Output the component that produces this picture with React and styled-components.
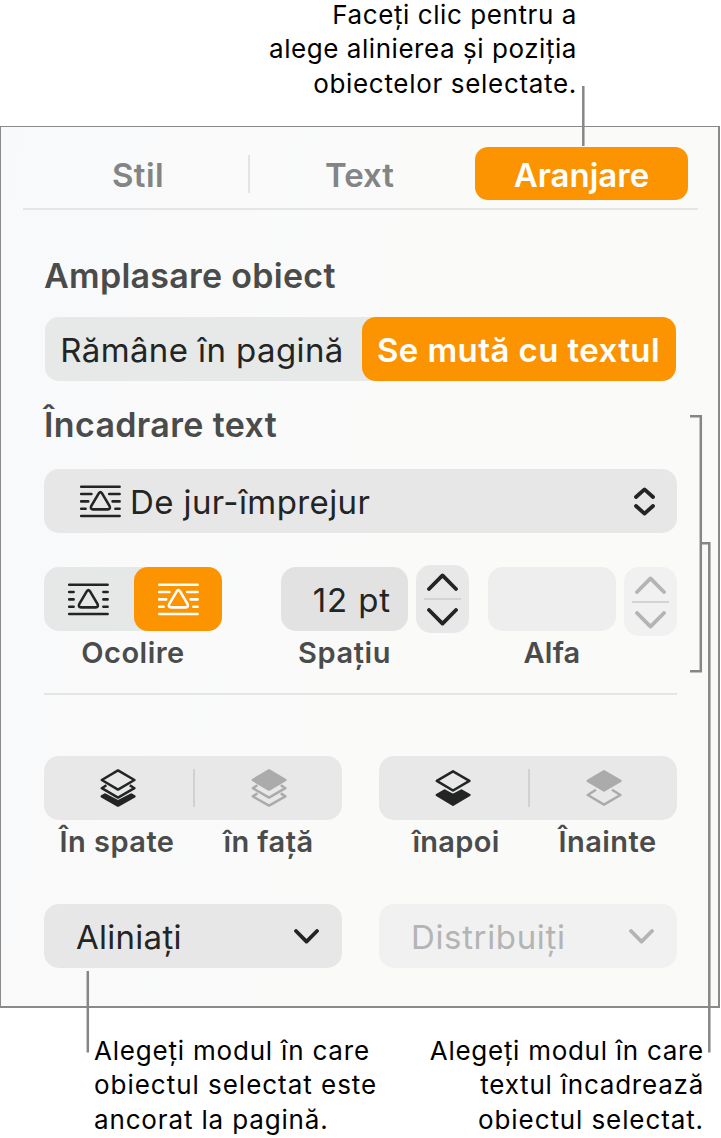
import React from "react";
import styled, { createGlobalStyle } from "styled-components";

const GlobalStyle = createGlobalStyle`
  :root {
    --orange: #fb9400;
    --ink: #232424;
    --heading: #4a4b4b;
    --muted: #b4b4b4;
    --line: #868686;
  }

  body {
    margin: 0;
    background: #fff;
    font-family: Inter, "Liberation Sans", sans-serif;
  }
`;

// text wrapping glyph, `tight` lines follow the contour of the triangle
const WrapIcon = ({ tight }) => (
  <svg width="43" height="33" viewBox="0 0 43 33" fill="none" stroke="currentColor" strokeWidth="2.6" strokeLinecap="round" strokeLinejoin="round">
    <path d="M2.2 1.8H40.6M2.2 31H40.6" />
    {tight ? (
      <path d="M2.2 9H12.4M30.2 9H40.6M2.2 16.4H9.2M33.6 16.4H40.6M2.2 23.7H6.6M36.4 23.7H40.6" />
    ) : (
      <path d="M2.2 9H6.6M36.4 9H40.6M2.2 16.4H6.6M36.4 16.4H40.6M2.2 23.7H6.6M36.4 23.7H40.6" />
    )}
    <path d="M19.9 8.2Q21.4 6 22.9 8.2L30.6 21.2Q31.6 24.4 28.8 24.4H14Q11.2 24.4 12.2 21.2Z" />
  </svg>
);

const Chevron = ({ width, height, up }) => (
  <svg width={width} height={height} fill="none" stroke="currentColor" strokeWidth="3.8" strokeLinecap="round" strokeLinejoin="round">
    <path
      d={up
        ? `M2 ${height - 2}L${width / 2} 2.4L${width - 2} ${height - 2}`
        : `M2 2L${width / 2} ${height - 2.4}L${width - 2} 2`}
    />
  </svg>
);

const TopSheet = ({ y, filled }) => (
  <path
    d={`M18 ${y}L34.4 ${y + 9.6}L18 ${y + 19.2}L1.8 ${y + 9.6}Z`}
    fill={filled ? "currentColor" : "none"}
  />
);

const Layers = ({ children }) => (
  <svg width="36" height="40" viewBox="0 0 36 40" fill="none" stroke="currentColor" strokeWidth="2.5" strokeLinejoin="round">
    {children}
  </svg>
);

const BackIcon = () => (
  <Layers>
    <TopSheet y={2.4} />
    <path d="M6.4 17.2L1.8 20.2L18 29.6L34.4 20.2L29.8 17.2" />
    <path d="M5 26.6L1.8 28.4L18 37.6L34.4 28.4L31.2 26.6L18 33.4Z" fill="currentColor" />
  </Layers>
);

const FrontIcon = () => (
  <Layers>
    <TopSheet y={2.4} filled />
    <path d="M6.4 17.2L1.8 20.2L18 29.6L34.4 20.2L29.8 17.2" />
    <path d="M6.4 25.4L1.8 28.4L18 37.6L34.4 28.4L29.8 25.4" />
  </Layers>
);

const BackwardIcon = () => (
  <Layers>
    <TopSheet y={3.3} />
    <path d="M9.6 22.6L1.8 27L18 36.8L34.4 27L26.4 22.6L18 27Z" fill="currentColor" />
  </Layers>
);

const ForwardIcon = () => (
  <Layers>
    <TopSheet y={3.3} filled />
    <path d="M10 21.8L1.8 27L18 36.6L34.4 27L26 21.8" />
  </Layers>
);

const Caption = ({ lines, align }) => (
  <CaptionText $align={align}>
    {lines.map(([text, spacing]) => (
      <Line key={text} $spacing={spacing}>{text}</Line>
    ))}
  </CaptionText>
);

const LayerGroup = ({ left, right }) => (
  <div>
    <ButtonGroup>
      <LayerButton>{left.icon}</LayerButton>
      <Divider />
      <LayerButton $disabled>{right.icon}</LayerButton>
    </ButtonGroup>
    <LabelPair>
      <Label $spacing={left.spacing} $shift={left.shift}>{left.label}</Label>
      <Label $spacing={right.spacing} $shift={right.shift}>{right.label}</Label>
    </LabelPair>
  </div>
);

const NumberStepper = ({ disabled }) => (
  <Stepper $disabled={disabled}>
    <Chevron width={31} height={18} up />
    <StepperRule />
    <Chevron width={31} height={18} />
  </Stepper>
);

const App = () => (
  <Page>
    <GlobalStyle />
    <Header>
      <Caption
        align="right"
        lines={[
          ["Faceți clic pentru a", 0.58],
          ["alege alinierea și poziția", 0.55],
          ["obiectelor selectate.", 0.68],
        ]}
      />
    </Header>

    <Panel>
      <Tabs>
        <Tab $spacing={0.4} $left={5}>Stil</Tab>
        <TabDivider />
        <Tab $right={6}>Text</Tab>
        <ActiveTab>Aranjare</ActiveTab>
      </Tabs>

      <Body>
        <Heading $spacing={0.27}>Amplasare obiect</Heading>
        <Placement>
          <Segment $spacing={0.4}>Rămâne în pagină</Segment>
          <Segment $active $spacing={0.42}>Se mută cu textul</Segment>
        </Placement>

        <Heading $spacing={0.35} $top={22}>Încadrare text</Heading>
        <Select $top={22} $padding="0 22px 0 35px">
          <WrapIcon tight />
          <SelectText $spacing={0.4} $gap={8}>De jur-împrejur</SelectText>
          <UpDown>
            <Chevron width={21} height={12} up />
            <Chevron width={21} height={12} />
          </UpDown>
        </Select>

        <Controls>
          <Column>
            <FitGroup>
              <FitButton><WrapIcon /></FitButton>
              <FitButton $active><WrapIcon tight /></FitButton>
            </FitGroup>
            <Label $spacing={0.5}>Ocolire</Label>
          </Column>
          <Column>
            <Field>12 pt</Field>
            <Label $spacing={0.6}>Spațiu</Label>
          </Column>
          <NumberStepper />
          <Column>
            <Field $disabled />
            <Label $spacing={0.2}>Alfa</Label>
          </Column>
          <NumberStepper disabled />
        </Controls>

        <Rule />

        <Pair $top={61}>
          <LayerGroup
            left={{ icon: <BackIcon />, label: "În spate", spacing: 0.46, shift: -4 }}
            right={{ icon: <FrontIcon />, label: "în față", spacing: 0.45, shift: 1 }}
          />
          <LayerGroup
            left={{ icon: <BackwardIcon />, label: "înapoi", spacing: 0.3, shift: 4 }}
            right={{ icon: <ForwardIcon />, label: "Înainte", spacing: 0.45, shift: 9 }}
          />
        </Pair>

        <Pair $top={44}>
          <Select $padding="0 23px 0 32px">
            <SelectText $spacing={0.27}>Aliniați</SelectText>
            <Chevron width={25} height={15} />
          </Select>
          <Select $disabled $padding="0 23px 0 32px">
            <SelectText $spacing={0.65}>Distribuiți</SelectText>
            <Chevron width={25} height={15} />
          </Select>
        </Pair>
      </Body>
    </Panel>

    <Footer>
      <Caption
        lines={[
          ["Alegeți modul în care", 0.8],
          ["obiectul selectat este", 0.97],
          ["ancorat la pagină.", 0.85],
        ]}
      />
      <Caption
        align="right"
        lines={[
          ["Alegeți modul în care", 0.72],
          ["textul încadrează", 0.77],
          ["obiectul selectat.", 0.9],
        ]}
      />
    </Footer>

    <Callouts width="721" height="1138">
      <path d="M583.3 86V146M87.8 971V1052.5M690 416.3H700.8V671.3H690M702 543.3H709.3V1052.5" />
    </Callouts>
  </Page>
);

const Page = styled.div`
  position: relative;
  display: flex;
  flex-direction: column;
  width: 721px;
  height: 1138px;
`;

const Header = styled.header`
  height: 126px;
  flex-shrink: 0;
  display: flex;
  justify-content: flex-end;
  padding-right: 144px;
  box-sizing: border-box;

  > div {
    margin-top: -2px;
  }
`;

const Footer = styled.footer`
  display: flex;
  justify-content: space-between;
  padding: 26px 17px 0 94px;
`;

const CaptionText = styled.div`
  display: flex;
  flex-direction: column;
  align-items: ${p => p.$align === "right" ? "flex-end" : "flex-start"};
  font-size: 26px;
  line-height: 34.4px;
  color: #000;
`;

const Line = styled.span`
  white-space: nowrap;
  letter-spacing: ${p => p.$spacing}px;
`;

const Panel = styled.main`
  width: 720px;
  height: 882px;
  flex-shrink: 0;
  box-sizing: border-box;
  padding: 20px 20px 0 22px;
  border: solid #8a8a8a;
  border-width: 1px 2px 2px 1px;
  background: linear-gradient(100deg, #f8f9fa 0%, #fafafa 40%, #fafaf9 100%);
`;

const Tabs = styled.nav`
  display: grid;
  grid-template-columns: 225px 2px 1fr 213px;
  width: 675px;
  height: 63px;
  box-sizing: border-box;
  padding-right: 10px;
  border-bottom: 2px solid #e4e5e5;
`;

const Tab = styled.button`
  height: 53px;
  border: none;
  background: none;
  padding: 2px ${p => p.$right || 0}px 0 ${p => p.$left || 0}px;
  font: 600 33px Inter, sans-serif;
  letter-spacing: ${p => p.$spacing || 0}px;
  color: #838484;
`;

const ActiveTab = styled(Tab)`
  border-radius: 13px;
  background-color: var(--orange);
  color: #fff;
`;

const TabDivider = styled.div`
  height: 38px;
  margin-top: 8px;
  background-color: #e3e4e4;
`;

const Body = styled.div`
  width: 633px;
  margin-left: 21px;
  padding-top: 44px;
`;

const Heading = styled.h2`
  margin: ${p => p.$top || 0}px 0 0;
  font-size: 34px;
  font-weight: 600;
  line-height: 44px;
  letter-spacing: ${p => p.$spacing}px;
  color: var(--heading);
`;

const Placement = styled.div`
  display: grid;
  grid-template-columns: 317px 314px;
  height: 64px;
  width: 631px;
  margin: 19px 0 0 1px;
  border-radius: 14px;
  background-color: #e7e8e8;
`;

const Segment = styled.button`
  border: none;
  border-radius: 14px;
  padding: 1px ${p => p.$active ? 1 : 3}px 0 0;
  background: ${p => p.$active ? "var(--orange)" : "none"};
  color: ${p => p.$active ? "#fff" : "var(--ink)"};
  font: ${p => p.$active ? 600 : 400} 33px Inter, sans-serif;
  letter-spacing: ${p => p.$spacing}px;
  white-space: nowrap;
`;

const Select = styled.div`
  display: flex;
  align-items: center;
  height: 64px;
  box-sizing: border-box;
  margin-top: ${p => p.$top || 0}px;
  padding: ${p => p.$padding};
  border-radius: 15px;
  background-color: ${p => p.$disabled ? "#f1f1f1" : "#e7e7e7"};
  color: ${p => p.$disabled ? "var(--muted)" : "var(--ink)"};
`;

const SelectText = styled.span`
  flex: 1;
  padding-top: 1px;
  margin-left: ${p => p.$gap || 0}px;
  font-size: 33px;
  letter-spacing: ${p => p.$spacing}px;
`;

const UpDown = styled.span`
  display: flex;
  flex-direction: column;
  gap: 5px;
`;

const Controls = styled.div`
  display: grid;
  grid-template-columns: 178px 127px 53px 128px 53px;
  column-gap: 8px;
  height: 106px;
  margin-top: 32px;

  > :nth-child(2), > :nth-child(3) {
    margin: 0 -51px 0 51px;
  }

  > :nth-child(4), > :nth-child(5) {
    margin: 0 -62px 0 62px;
  }
`;

const Column = styled.div`
  padding-top: 2px;
`;

const FitGroup = styled.div`
  display: grid;
  grid-template-columns: 90px 88px;
  height: 64px;
  border-radius: 15px;
  background-color: #e6e7e7;
`;

const FitButton = styled.button`
  display: flex;
  align-items: center;
  justify-content: center;
  border: none;
  border-radius: 14px;
  padding: 0 ${p => p.$active ? 0 : 2}px 0 0;
  background: ${p => p.$active ? "var(--orange)" : "none"};
  color: ${p => p.$active ? "#fff" : "var(--ink)"};
`;

const Field = styled.div`
  height: 64px;
  box-sizing: border-box;
  padding: 1px 17px 0 0;
  border-radius: 15px;
  background-color: ${p => p.$disabled ? "#eeeeee" : "#e2e2e2"};
  font-size: 33px;
  line-height: 64px;
  letter-spacing: 0.9px;
  text-align: right;
  color: var(--ink);
`;

const Stepper = styled.div`
  display: flex;
  flex-direction: column;
  align-items: center;
  gap: 8px;
  height: ${p => p.$disabled ? 69 : 68}px;
  box-sizing: border-box;
  padding-top: ${p => p.$disabled ? 9 : 8}px;
  border-radius: 15px;
  background-color: ${p => p.$disabled ? "#f1f1f1" : "#e8e8e8"};
  color: ${p => p.$disabled ? "var(--muted)" : "var(--ink)"};

  && {
    margin-top: ${p => p.$disabled ? 2 : 0}px;
  }
`;

const StepperRule = styled.div`
  width: 37px;
  height: 2px;
  margin: -1px 0 0;
  background-color: #d3d3d3;
`;

const Label = styled.div`
  margin-top: 3px;
  padding-left: ${p => p.$shift > 0 ? p.$shift : 0}px;
  padding-right: ${p => p.$shift < 0 ? -p.$shift : 0}px;
  font-size: 29px;
  font-weight: 600;
  line-height: 38px;
  letter-spacing: ${p => p.$spacing}px;
  text-align: center;
  color: var(--heading);
`;

const Rule = styled.div`
  height: 2px;
  margin-top: 22px;
  background-color: #e4e5e5;
`;

const Pair = styled.div`
  display: grid;
  grid-template-columns: 298px 298px;
  column-gap: 37px;
  margin-top: ${p => p.$top}px;
`;

const ButtonGroup = styled.div`
  display: grid;
  grid-template-columns: 149px 2px 147px;
  align-items: center;
  height: 64px;
  border-radius: 15px;
  background-color: #e7e8e7;
`;

const LayerButton = styled.button`
  display: flex;
  justify-content: center;
  border: none;
  padding: ${p => p.$disabled ? "0" : "0 1px 0 0"};
  background: none;
  color: ${p => p.$disabled ? "#aaabaa" : "var(--ink)"};
`;

const Divider = styled.div`
  height: 38px;
  background-color: #d0d1d1;
`;

const LabelPair = styled.div`
  display: grid;
  grid-template-columns: 150px 148px;
  height: 40px;
`;

const Callouts = styled.svg`
  position: absolute;
  top: 0;
  left: 0;
  pointer-events: none;
  fill: none;
  stroke: var(--line);
  stroke-width: 2.5;
`;

export default App;
